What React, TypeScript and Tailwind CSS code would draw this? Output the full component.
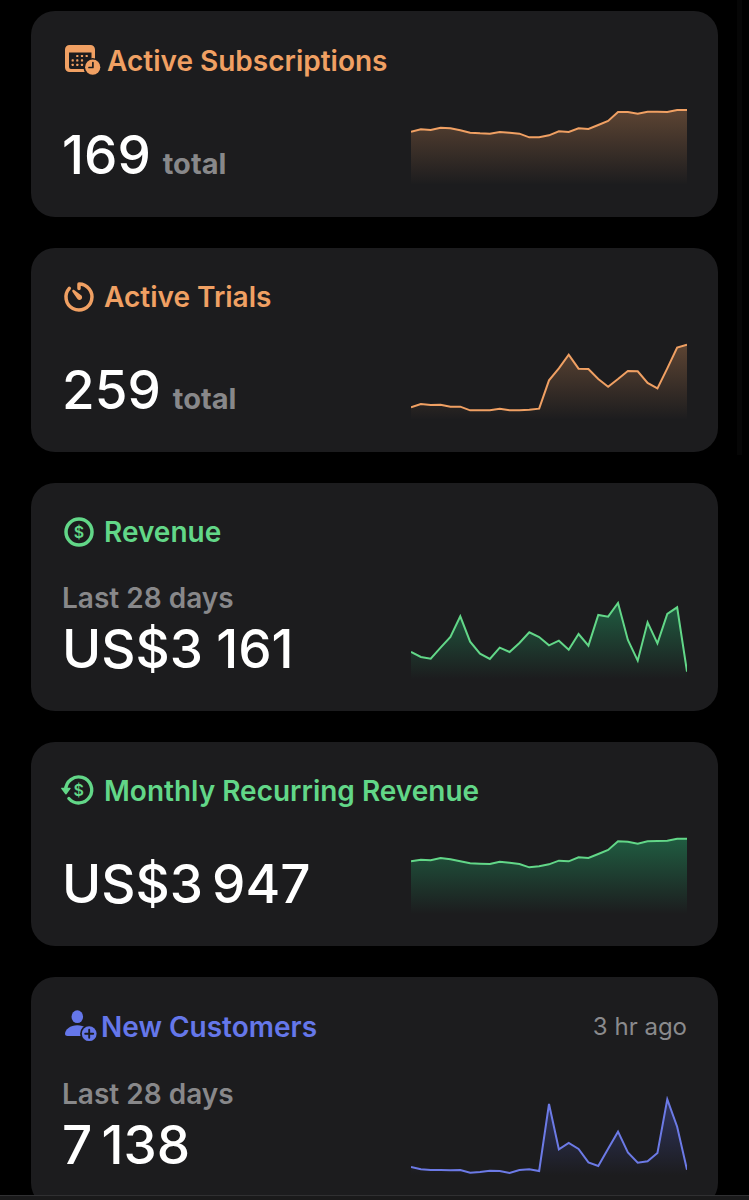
import type { ReactNode } from "react";

type Tone = "orange" | "green" | "indigo";

const TONES: Record<Tone, { text: string; stroke: string; fill: string; opacity: number }> = {
  orange: { text: "text-[#f0a063]", stroke: "#f0a063", fill: "#f0a063", opacity: 0.32 },
  green: { text: "text-[#62d788]", stroke: "#62d788", fill: "#24a86a", opacity: 0.48 },
  indigo: { text: "text-[#6577ea]", stroke: "#6c7ae6", fill: "#5566e0", opacity: 0.36 },
};

const CHART_W = 829;
const CHART_H = 240;
const BASELINE = 237;

function Sparkline({ id, label, data, tone }: { id: string; label: string; data: number[]; tone: Tone }) {
  const { stroke, fill, opacity } = TONES[tone];
  const points = data.map((v, i) => `${((i * CHART_W) / (data.length - 1)).toFixed(1)},${BASELINE - v}`);
  return (
    <svg
      role="img"
      aria-label={label}
      viewBox={`0 0 ${CHART_W} ${CHART_H}`}
      preserveAspectRatio="none"
      className="h-20 w-[276px] shrink-0"
    >
      <defs>
        <linearGradient id={id} gradientUnits="userSpaceOnUse" x1="0" y1="0" x2="0" y2={BASELINE}>
          <stop offset="0" stopColor={fill} stopOpacity={opacity} />
          <stop offset="1" stopColor={fill} stopOpacity="0" />
        </linearGradient>
      </defs>
      <polygon points={`0,${BASELINE} ${points.join(" ")} ${CHART_W},${BASELINE}`} fill={`url(#${id})`} />
      <polyline points={points.join(" ")} fill="none" stroke={stroke} strokeWidth="6" strokeLinejoin="miter" />
    </svg>
  );
}

function CalendarClockIcon() {
  const dots = [
    [15.3, 13], [20, 13], [24.7, 13],
    [10.7, 17.4], [15.3, 17.4], [20, 17.4],
    [10.7, 21.8], [15.3, 21.8], [20, 21.8],
  ];
  return (
    <svg aria-hidden="true" viewBox="0 0 41 36" className="h-9 w-[41px] shrink-0">
      <path
        fill="currentColor"
        fillRule="evenodd"
        d="M7.5 2h21A4.5 4.5 0 0 1 33 6.500V24.500A4.500 4.500 0 0 1 28.500 29H7.500A4.500 4.500 0 0 1 3 24.500V6.500A4.500 4.500 0 0 1 7.500 2ZM7 9.500V24a2 2 0 0 0 2 2H27.500a2 2 0 0 0 2-2V9.500Z"
      />
      {dots.map(([x, y]) => (
        <rect key={`${x}-${y}`} x={x - 1.1} y={y - 1.1} width="2.200" height="2.200" rx="0.600" fill="currentColor" />
      ))}
      <circle cx="30.700" cy="24.200" r="9.300" fill="#1c1c1e" />
      <circle cx="30.700" cy="24.200" r="7.600" fill="currentColor" />
      <path d="M30.900 19.500V24.500H27" fill="none" stroke="#1c1c1e" strokeWidth="1.700" strokeLinecap="round" strokeLinejoin="round" />
    </svg>
  );
}

function TimerIcon() {
  return (
    <svg aria-hidden="true" viewBox="0 0 38 36" className="h-9 w-[38px] shrink-0">
      <path d="M17 9.400V5A13 13 0 1 1 7.300 9.300" fill="none" stroke="currentColor" strokeWidth="3.500" strokeLinecap="round" strokeLinejoin="round" />
      <path d="M10.600 11.100c.5-.5 1-.5 1.600-.1l6.600 4.900a2.700 2.700 0 1 1-3.700 3.700l-4.700-6.900c-.4-.6-.3-1.100.2-1.600Z" fill="currentColor" />
    </svg>
  );
}

function DollarCircleIcon() {
  return (
    <svg aria-hidden="true" viewBox="0 0 38 36" className="h-9 w-[38px] shrink-0">
      <circle cx="17" cy="18" r="13" fill="none" stroke="currentColor" strokeWidth="3.500" />
      <text x="17" y="23.800" textAnchor="middle" fontSize="16" fontWeight="600" fill="currentColor">$</text>
    </svg>
  );
}

function DollarRefreshIcon() {
  return (
    <svg aria-hidden="true" viewBox="0 0 38 36" className="h-9 w-[38px] shrink-0 overflow-visible">
      <path d="M3.700 17A13 13 0 1 1 6.900 25.500" fill="none" stroke="currentColor" strokeWidth="3.400" strokeLinecap="round" />
      <path d="M-.2 15.400H8L3.900 20.700Z" fill="currentColor" stroke="currentColor" strokeWidth="1.400" strokeLinejoin="round" />
      <text x="16.700" y="22.800" textAnchor="middle" fontSize="16" fontWeight="600" fill="currentColor">$</text>
    </svg>
  );
}

function PersonAddIcon() {
  return (
    <svg aria-hidden="true" viewBox="0 0 35 36" className="h-9 w-[35px] shrink-0">
      <ellipse cx="15.300" cy="7.700" rx="5.800" ry="6.400" fill="currentColor" />
      <path d="M15.300 16.300c7 0 12.300 4.200 12.300 8.200 0 1.500-1 2.500-2.500 2.500H5.500C4 27 3 26.300 3 24.800c0-4.200 5.300-8.500 12.300-8.500Z" fill="currentColor" />
      <circle cx="27.200" cy="24.700" r="9.100" fill="#1c1c1e" />
      <circle cx="27.200" cy="24.700" r="7.400" fill="currentColor" />
      <path d="M27.200 20.700v8M23.200 24.700h8" fill="none" stroke="#1c1c1e" strokeWidth="1.900" strokeLinecap="round" />
    </svg>
  );
}

interface Metric {
  id: string;
  title: string;
  tone: Tone;
  icon: ReactNode;
  value: string;
  suffix?: string;
  period?: string;
  updated?: string;
  tall?: boolean;
  data: number[];
}

const METRICS: Metric[] = [
  {
    id: "active-subscriptions",
    title: "Active Subscriptions",
    tone: "orange",
    icon: <CalendarClockIcon />,
    value: "169",
    suffix: "total",
    tall: true,
    data: [160, 167, 165, 172, 170, 164, 157, 155, 154, 159, 157, 154, 143, 143, 149, 161, 159, 170, 168, 180, 192, 219, 219, 214, 220, 220, 219, 225, 225],
  },
  {
    id: "active-trials",
    title: "Active Trials",
    tone: "orange",
    icon: <TimerIcon />,
    value: "259",
    suffix: "total",
    data: [38, 48, 45, 46, 40, 40, 29, 29, 29, 34, 29, 29, 31, 34, 119, 155, 196, 154, 153, 123, 100, 123, 147, 146, 111, 95, 155, 217, 226],
  },
  {
    id: "revenue",
    title: "Revenue",
    tone: "green",
    icon: <DollarCircleIcon />,
    value: "US$3\u2005161",
    period: "Last 28 days",
    data: [81, 66, 61, 94, 126, 188, 112, 76, 60, 94, 81, 108, 140, 126, 101, 115, 88, 135, 100, 192, 187, 228, 117, 55, 170, 107, 195, 215, 22],
  },
  {
    id: "mrr",
    title: "Monthly Recurring Revenue",
    tone: "green",
    icon: <DollarRefreshIcon />,
    value: "US$3\u2009947",
    data: [158, 163, 161, 168, 164, 158, 152, 151, 150, 157, 154, 150, 140, 143, 149, 160, 158, 170, 168, 180, 192, 218, 217, 211, 218, 219, 220, 226, 226],
  },
  {
    id: "new-customers",
    title: "New Customers",
    tone: "indigo",
    icon: <PersonAddIcon />,
    value: "7\u2009138",
    period: "Last 28 days",
    updated: "3 hr ago",
    tall: true,
    data: [24, 17, 15, 15, 14, 15, 7, 9, 13, 12, 6, 15, 17, 12, 213, 77, 96, 78, 38, 27, 79, 130, 68, 37, 41, 66, 227, 145, 16],
  },
];

function MetricCard({ metric }: { metric: Metric }) {
  const { id, title, tone, icon, value, suffix, period, updated, tall, data } = metric;
  return (
    <section aria-labelledby={`${id}-title`} className="shrink-0 rounded-3xl bg-[#1c1c1e] p-[31px]">
      <header className={`flex items-center justify-between ${tall ? "h-[38px]" : "h-9"}`}>
        <div className={`flex items-center gap-1 ${TONES[tone].text}`}>
          {icon}
          <h2 id={`${id}-title`} className="text-[28px] leading-9 font-semibold whitespace-nowrap">
            {title}
          </h2>
        </div>
        {updated && <span className="text-2xl leading-9 text-[#8a8a8d]">{updated}</span>}
      </header>
      <div className="mt-[26px] flex items-end justify-between">
        <div>
          {period && <p className="pt-1 pb-0.5 text-[28px] leading-9 font-semibold text-[#88888a]">{period}</p>}
          <p className="flex items-baseline gap-3 text-[53px] leading-[62px] font-medium whitespace-nowrap text-white">
            {value}
            {suffix && <span className="text-[29px] leading-9 font-bold text-[#88888a]">{suffix}</span>}
          </p>
        </div>
        <Sparkline id={`${id}-fill`} label={`${title} trend`} data={data} tone={tone} />
      </div>
    </section>
  );
}

export default function App() {
  return (
    <div className="relative flex h-screen flex-col overflow-hidden bg-black font-['Inter',sans-serif]">
      <main className="flex min-h-0 flex-1 flex-col gap-[31px] overflow-hidden px-[31px] pt-[11px]">
        {METRICS.map((metric) => (
          <MetricCard key={metric.id} metric={metric} />
        ))}
      </main>
      <div aria-hidden="true" className="absolute top-0 right-[7px] h-[455px] w-[5px] bg-[#060606]" />
      <footer className="h-[5px] shrink-0 border-t border-[#303032] bg-[#1a1a1b]" />
    </div>
  );
}
